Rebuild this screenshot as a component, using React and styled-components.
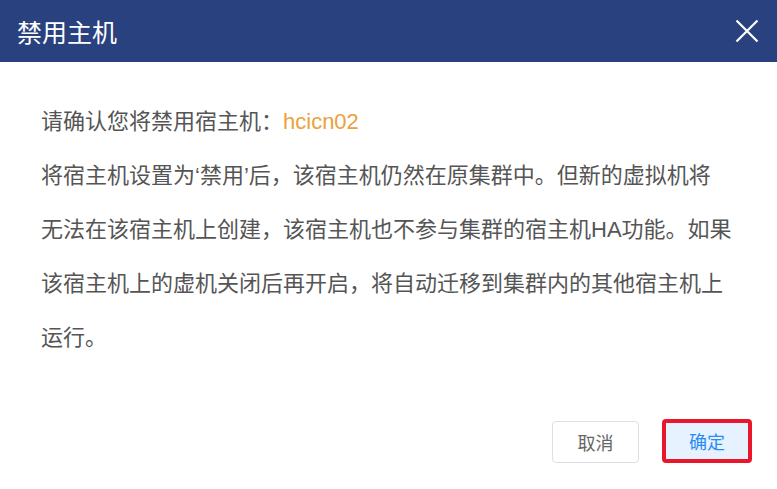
import React from "react";
import styled, { createGlobalStyle } from "styled-components";

const Global = createGlobalStyle`
  html, body { margin: 0; padding: 0; background: #fff; }
  body { font-family: "Liberation Sans", "Noto Sans CJK SC", sans-serif; }
`;

const Dialog = styled.div`
  width: 777px;
  height: 489px;
  display: flex;
  flex-direction: column;
  background: #fff;
  overflow: hidden;
`;

const Header = styled.div`
  height: 62px;
  flex: none;
  background: #29427f;
  display: flex;
  align-items: center;
  justify-content: space-between;
  padding: 0 17px 0 17px;
  box-sizing: border-box;
`;

const Title = styled.h1`
  margin: 0;
  font-size: 25px;
  font-weight: 400;
  color: #fff;
`;

const Close = styled.button`
  width: 26px;
  height: 26px;
  padding: 0;
  border: 0;
  background: transparent;
  display: flex;
  align-items: center;
  justify-content: center;
  cursor: pointer;
`;

const Body = styled.div`
  padding: 33px 10px 0 41px;
  flex: 1;
`;

const Text = styled.p`
  margin: 0;
  font-size: 22px;
  line-height: 54px;
  color: #555;
  white-space: nowrap;
`;

const Quote = styled.span`
  font-family: "Liberation Sans", sans-serif;
`;

const Host = styled.span`
  color: #eba13c;
`;

const Footer = styled.div`
  display: flex;
  justify-content: flex-end;
  align-items: flex-end;
  gap: 23px;
  padding: 0 25px 26px 0;
`;

const Button = styled.button`
  box-sizing: border-box;
  width: ${(p) => (p.$primary ? "90px" : "87px")};
  height: ${(p) => (p.$primary ? "44px" : "42px")};
  border-radius: 4px;
  border: ${(p) => (p.$primary ? "4px solid #e8172b" : "1px solid #dcdfe6")};
  background: ${(p) => (p.$primary ? "#e6f2ff" : "#fff")};
  color: ${(p) => (p.$primary ? "#2a8cf0" : "#666")};
  font-family: "Liberation Sans", "Noto Sans CJK SC", sans-serif;
  font-size: 18px;
  padding: 0;
  cursor: pointer;
`;

export default function App() {
  return (
    <>
      <Global />
      <Dialog>
        <Header>
          <Title>禁用主机</Title>
          <Close aria-label="close">
            <svg width="24" height="24" viewBox="0 0 24 24">
              <path d="M1.5 1.5 L22.5 22.5 M22.5 1.5 L1.5 22.5" stroke="#fff" strokeWidth="2.2" fill="none" />
            </svg>
          </Close>
        </Header>
        <Body>
          <Text>
            请确认您将禁用宿主机：<Host>hcicn02</Host>
            <br />
            将宿主机设置为<Quote>‘</Quote>禁用<Quote>’</Quote>后，该宿主机仍然在原集群中。但新的虚拟机将
            <br />
            无法在该宿主机上创建，该宿主机也不参与集群的宿主机HA功能。如果
            <br />
            该宿主机上的虚机关闭后再开启，将自动迁移到集群内的其他宿主机上
            <br />
            运行。
          </Text>
        </Body>
        <Footer>
          <Button>取消</Button>
          <Button $primary>确定</Button>
        </Footer>
      </Dialog>
    </>
  );
}
